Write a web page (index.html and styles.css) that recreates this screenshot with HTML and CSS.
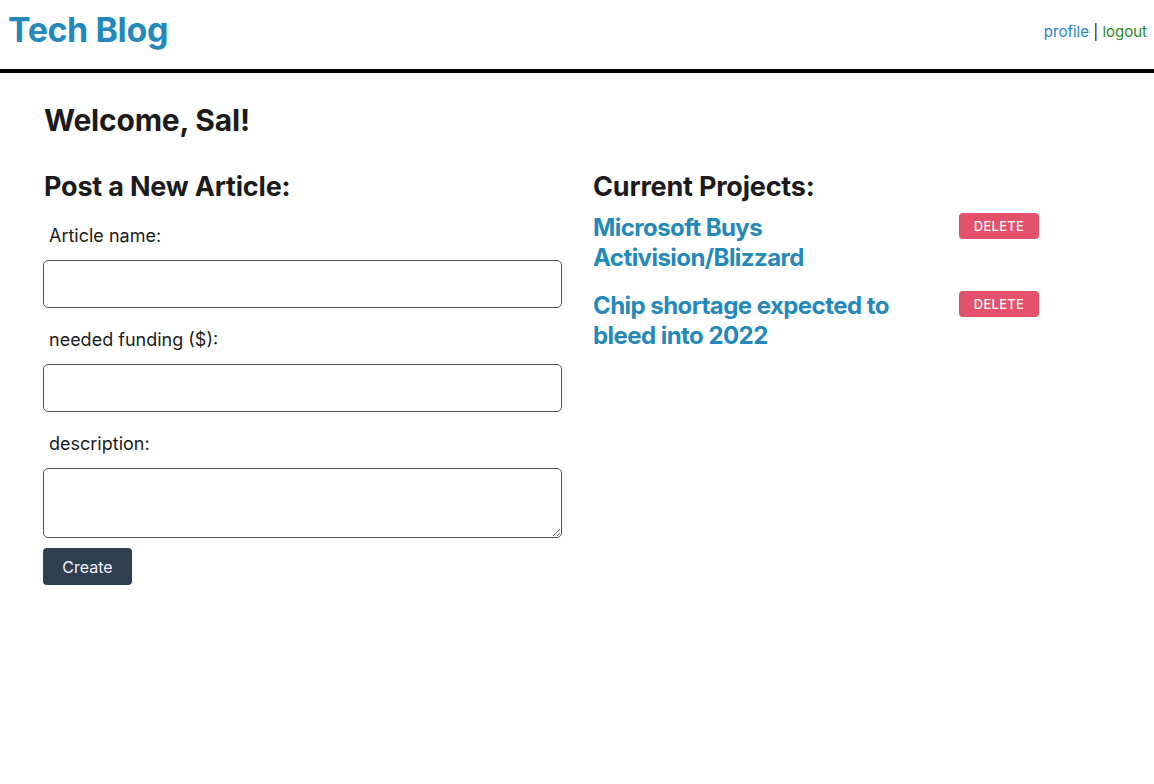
FILE: index.html
```html
<!DOCTYPE html>
<html>
<head>
<meta charset="utf-8">
<title>Tech Blog</title>
<link rel="stylesheet" href="styles.css">
</head>
<body>
<header class="site-header">
  <a class="brand" href="#">Tech Blog</a>
  <nav class="nav"><a class="nav-profile" href="#">profile</a> | <a class="nav-logout" href="#">logout</a></nav>
</header>
<main class="main">
  <h1 class="welcome">Welcome, Sal!</h1>
  <div class="columns">
    <section class="col-left">
      <h2 class="section-title">Post a New Article:</h2>
      <form class="form">
        <label class="label">Article name:</label>
        <input class="input" type="text">
        <label class="label">needed funding ($):</label>
        <input class="input" type="text">
        <label class="label">description:</label>
        <textarea class="textarea"></textarea>
        <button class="create-btn" type="button">Create</button>
      </form>
    </section>
    <section class="col-right">
      <h2 class="section-title">Current Projects:</h2>
      <div class="project">
        <a class="project-title" href="#">Microsoft Buys Activision/Blizzard</a>
        <button class="delete-btn" type="button">DELETE</button>
      </div>
      <div class="project">
        <a class="project-title" href="#">Chip shortage expected to bleed into 2022</a>
        <button class="delete-btn" type="button">DELETE</button>
      </div>
    </section>
  </div>
</main>
</body>
</html>
```
FILE: styles.css
```css
* { box-sizing: border-box; }
body {
  margin: 0;
  font-family: Inter, "Noto Sans", "Liberation Sans", sans-serif;
  color: #1b1b1b;
  background: #fff;
}
a { text-decoration: none; }

.site-header {
  height: 73px;
  border-bottom: 4px solid #000;
  display: flex;
  justify-content: space-between;
  align-items: flex-start;
  padding: 0 7px 0 8px;
}
.brand {
  font-size: 34px;
  font-weight: 700;
  color: #2389bb;
  line-height: 44px;
  margin-top: 8px;
  letter-spacing: -0.4px;
}
.nav {
  font-size: 15px;
  line-height: 20px;
  margin-top: 22px;
  color: #1b1b1b;
}
.nav-profile { color: #2389bb; }
.nav-logout { color: #1f8a1f; }

.main {
  padding: 0 44px;
}
.welcome {
  font-size: 30px;
  font-weight: 700;
  line-height: 36px;
  margin: 29px 0 0 0;
  letter-spacing: -0.2px;
}
.columns {
  display: flex;
  margin-top: 33px;
}
.col-left {
  width: 549px;
}
.col-right {
  flex: 1;
}
.section-title {
  font-size: 27px;
  font-weight: 700;
  line-height: 32px;
  margin: 0;
  letter-spacing: -0.2px;
}
.form {
  display: flex;
  flex-direction: column;
  align-items: flex-start;
}
.label {
  font-size: 18px;
  line-height: 24px;
  margin: 20px 0 12px 5px;
}
.label:first-child { margin-top: 21px; }
.input, .textarea {
  width: 519px;
  margin-left: -1px;
  border: 1px solid #555;
  border-radius: 5px;
  font-family: inherit;
  font-size: 16px;
}
.input { height: 48px; }
.textarea { height: 70px; resize: vertical; display: block; }
.create-btn {
  margin-top: 10px;
  margin-left: -1px;
  width: 89px;
  height: 37px;
  background: #2e3f50;
  color: #f2f2f2;
  border: none;
  border-radius: 4px;
  font-family: inherit;
  font-size: 16px;
}

.project {
  display: flex;
  align-items: flex-start;
  margin-top: 10px;
}
.project + .project { margin-top: 18px; }
.project-title {
  width: 362px;
  font-size: 24px;
  font-weight: 700;
  line-height: 30px;
  color: #2389bb;
  letter-spacing: -0.55px;
}
.delete-btn {
  margin-left: 4px;
  width: 80px;
  height: 26px;
  background: #e5506b;
  color: #fff;
  border: none;
  border-radius: 4px;
  font-family: inherit;
  font-size: 13px;
  font-weight: 500;
  letter-spacing: 0.3px;
}
```
